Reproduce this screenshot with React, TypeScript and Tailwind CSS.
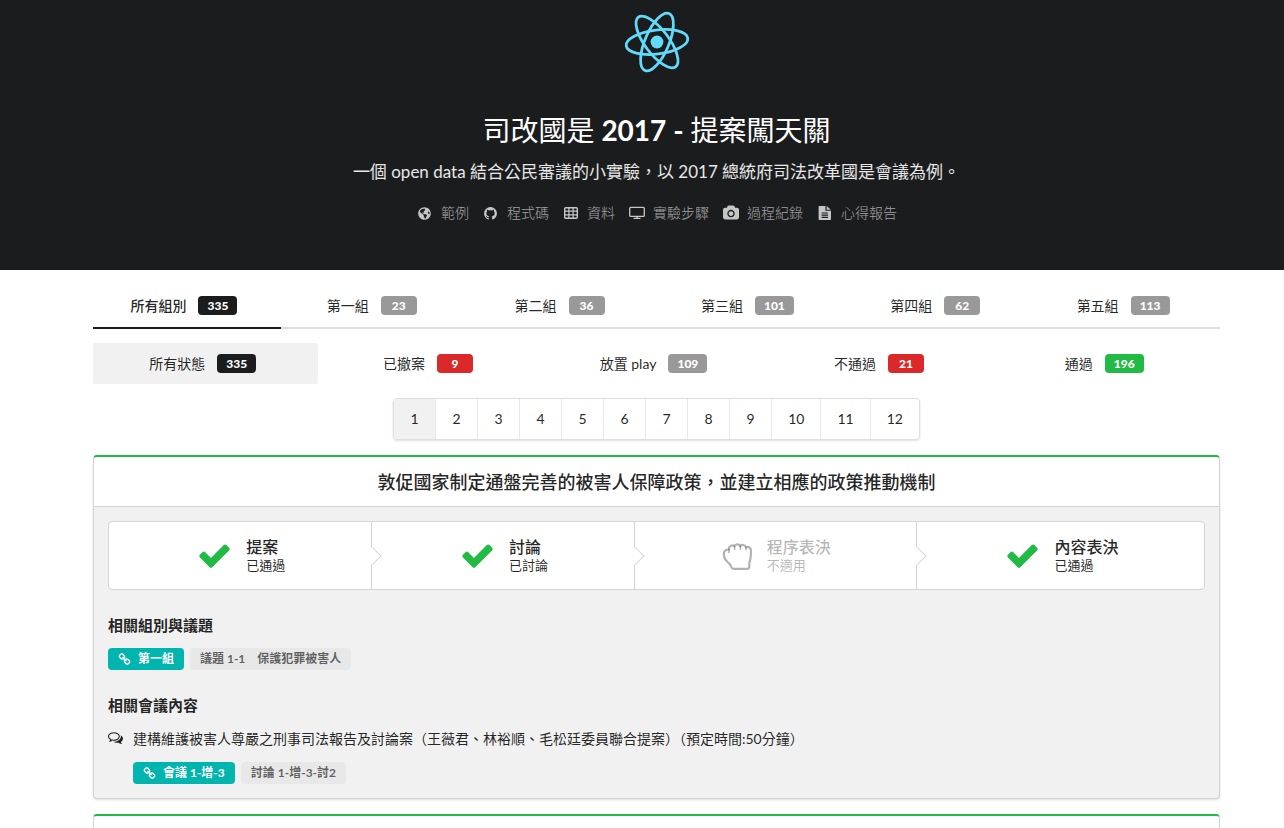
import type { ReactNode } from 'react';
import clsx from 'clsx';
import { FaGlobeAmericas } from 'react-icons/fa';

type Color = 'black' | 'grey' | 'red' | 'green';

interface MenuEntry {
  name: string;
  count: number;
  color: Color;
}

interface StepEntry {
  title: string;
  description: string;
  passed: boolean;
}

const groups: MenuEntry[] = [
  { name: '所有組別', count: 335, color: 'black' },
  { name: '第一組', count: 23, color: 'grey' },
  { name: '第二組', count: 36, color: 'grey' },
  { name: '第三組', count: 101, color: 'grey' },
  { name: '第四組', count: 62, color: 'grey' },
  { name: '第五組', count: 113, color: 'grey' },
];

const statuses: MenuEntry[] = [
  { name: '所有狀態', count: 335, color: 'black' },
  { name: '已撤案', count: 9, color: 'red' },
  { name: '放置 play', count: 109, color: 'grey' },
  { name: '不通過', count: 21, color: 'red' },
  { name: '通過', count: 196, color: 'green' },
];

const steps: StepEntry[] = [
  { title: '提案', description: '已通過', passed: true },
  { title: '討論', description: '已討論', passed: true },
  { title: '程序表決', description: '不適用', passed: false },
  { title: '內容表決', description: '已通過', passed: true },
];

const pages = [1, 2, 3, 4, 5, 6, 7, 8, 9, 10, 11, 12];

const badgeColors: Record<Color, string> = {
  black: 'bg-[#1b1c1d]',
  grey: 'bg-[#999999]',
  red: 'bg-[#db2828]',
  green: 'bg-[#21ba45]',
};

/* Icons */

function Logo() {
  return (
    <svg className="size-20" viewBox="-40 -40 80 80" fill="none" stroke="#61dafb" strokeWidth="2.8">
      <circle r="6.4" fill="#61dafb" stroke="none" />
      <g transform="rotate(-7)">
        <ellipse rx="31" ry="12" />
        <ellipse rx="31" ry="12" transform="rotate(60)" />
        <ellipse rx="31" ry="12" transform="rotate(120)" />
      </g>
    </svg>
  );
}

function GithubIcon() {
  return (
    <svg className="size-[15px]" viewBox="0 0 1792 1792" fill="currentColor">
      <path d="M1664 896q0 251-146.5 451.5t-378.5 277.5q-27 5-39.5-7t-12.5-30v-211q0-97-52-142 57-6 102.5-18t94-39 81-66.5 53-105 20.5-150.5q0-121-79-206 37-91-8-204-28-9-81 11t-92 44l-38 24q-93-26-192-26t-192 26q-16-11-42.5-27t-83.5-38.5-86-13.5q-44 113-7 204-79 85-79 206 0 85 20.5 150t52.5 105 80.5 67 94 39 102.5 18q-40 36-49 103-21 10-45 15t-57 5-65.5-21.5-55.5-62.5q-19-32-48.5-52t-49.5-24l-20-3q-21 0-29 4.5t-5 11.5 9 14 13 12l7 5q22 10 43.5 38t31.5 51l10 23q13 38 44 61.5t67 30 69.5 7 55.5-3.5l23-4q0 38 .5 89t.5 54q0 18-13 30t-40 7q-232-77-378.5-277.5t-146.5-451.5q0-209 103-385.5t279.5-279.5 385.5-103 385.5 103 279.5 279.5 103 385.5z" />
    </svg>
  );
}

function TableIcon() {
  return (
    <svg className="size-4" viewBox="0 0 16 16" fill="none" stroke="currentColor">
      <rect x="1.7" y="2.7" width="12.6" height="10.6" rx="1" strokeWidth="1.4" />
      <path d="M5.9 3v10M10.1 3v10M2 6.2h12M2 9.8h12" strokeWidth="1.2" />
    </svg>
  );
}

function ScreenIcon() {
  return (
    <svg className="size-4" viewBox="0 0 16 16" fill="none" stroke="currentColor" strokeWidth="1.3">
      <rect x=".7" y="2.4" width="14.6" height="9" rx="1" />
      <path d="M4.5 13.4h7M8 11.5v1.5" />
    </svg>
  );
}

function CameraIcon() {
  return (
    <svg className="size-4" viewBox="-64 -64 1920 1920" fill="currentColor">
      <path d="M896 672q119 0 203.5 84.5t84.5 203.5-84.5 203.5-203.5 84.5-203.5-84.5-84.5-203.5 84.5-203.5 203.5-84.5zm704-416q106 0 181 75t75 181v896q0 106-75 181t-181 75h-1408q-106 0-181-75t-75-181v-896q0-106 75-181t181-75h224l51-136q19-49 69.5-84.5t103.5-35.5h512q53 0 103.5 35.5t69.5 84.5l51 136h224zm-704 1152q185 0 316.5-131.5t131.5-316.5-131.5-316.5-316.5-131.5-316.5 131.5-131.5 316.5 131.5 316.5 316.5 131.5z" />
    </svg>
  );
}

function FileIcon() {
  return (
    <svg className="size-4" viewBox="0 0 16 16" fill="currentColor">
      <path
        fillRule="evenodd"
        d="M2.4 1h6v4.800h5.600v8.400q0 .8-.8.8H2.400q-.8 0-.8-.8V1.800q0-.8.8-.8zM4.600 7.400v1.100h6.400v-1.100zM4.600 9.600v1.100h6.400v-1.100zM4.600 11.800v1.100h6.400v-1.100zM9.600 1l4.300 3.700H9.600z"
      />
    </svg>
  );
}

function CheckIcon() {
  return (
    <svg className="size-[35px] text-[#21ba45]" viewBox="0 0 1792 1792" fill="currentColor">
      <path d="M1671 566q0 40-28 68l-724 724-136 136q-28 28-68 28t-68-28l-136-136-362-362q-28-28-28-68t28-68l136-136q28-28 68-28t68 28l294 295 656-657q28-28 68-28t68 28l136 136q28 28 28 68z" />
    </svg>
  );
}

function FistIcon() {
  return (
    <svg
      className="size-[35px]"
      viewBox="0 0 35 35"
      fill="none"
      stroke="currentColor"
      strokeWidth="2.2"
      strokeLinecap="round"
      strokeLinejoin="round"
    >
      <path d="M9 11.500C8.400 8.300 12.300 6.200 14.300 8.200 15.500 5.800 19 5.800 20.200 8 21.800 6.200 25.200 6.700 26 9.200 28.500 8.200 31 9.800 31 12.500 31 18 30.600 21.500 29.300 25V28.500Q29.300 30.800 27.200 30.800H13.800Q12 30.800 11.400 29C11 27.200 9.500 25.800 7.500 24 4.800 21.500 3.800 19.500 3.800 16.500 3.800 13 5.500 11.300 9 11.500Z" />
      <path d="M9 11.500v3M14.600 8.500v2.700M20.400 8.300v2.900M26 9.400v2.400" strokeWidth="1.6" />
    </svg>
  );
}

function LinkIcon() {
  return (
    <svg className="size-[13px]" viewBox="0 0 1792 1792" fill="currentColor">
      <path d="M1520 1216q0-40-28-68l-208-208q-28-28-68-28-42 0-72 32 3 3 19 18.5t21.5 21.5 15 19 13 25.5 3.5 27.5q0 40-28 68t-68 28q-15 0-27.5-3.5t-25.5-13-19-15-21.5-21.5-18.5-19q-33 31-33 73 0 40 28 68l206 207q27 27 68 27 40 0 68-26l147-146q28-28 28-67zm-703-705q0-40-28-68l-206-207q-28-28-68-28-39 0-68 27l-147 146q-28 28-28 67 0 40 28 68l208 208q27 27 68 27 42 0 72-31-3-3-19-18.5t-21.5-21.5-15-19-13-25.5-3.5-27.5q0-40 28-68t68-28q15 0 27.5 3.5t25.5 13 19 15 21.5 21.5 18.5 19q33-31 33-73zm895 705q0 120-85 203l-147 146q-83 83-203 83-121 0-204-85l-206-207q-83-83-83-203 0-123 88-209l-88-88q-86 88-208 88-120 0-204-84l-208-208q-84-84-84-204t85-203l147-146q83-83 203-83 121 0 204 85l206 207q83 83 83 203 0 123-88 209l88 88q86-88 208-88 120 0 204 84l208 208q84 84 84 204z" />
    </svg>
  );
}

function CommentsIcon() {
  return (
    <svg className="size-[15px]" viewBox="0 0 1792 1792" fill="currentColor">
      <path d="M704 384q-153 0-286 52t-211.5 141-78.5 191q0 82 53 158t149 132l97 56-35 84q34-20 62-39l44-31 53 10q78 14 153 14 153 0 286-52t211.5-141 78.5-191-78.5-191-211.5-141-286-52zm0-128q191 0 353.5 68.5t256.5 186.5 94 257-94 257-256.5 186.5-353.5 68.5q-86 0-176-16-124 88-278 128-36 9-86 16h-3q-11 0-20.5-8t-11.5-21q-1-3-1-6.5t.5-6.5 2-6l2.5-5 3.5-5.5 4-5 4.5-5 4-4.5q5-6 23-25t26-29.5 22.5-29 25-38.5 20.5-44q-124-72-195-177t-71-224q0-139 94-257t256.5-186.5 353.5-68.5zm822 1169q10 24 20.5 44t25 38.5 22.5 29 26 29.5 23 25q1 1 4 4.5t4.5 5 4 5 3.5 5.5l2.5 5 2 6 .5 6.5-1 6.5q-3 14-13 22t-22 7q-50-7-86-16-154-40-278-128-90 16-176 16-271 0-472-132 58 4 88 4 161 0 309-45t264-129q125-92 192-212t67-254q0-77-23-152 129 71 204 178t75 230q0 120-71 224.5t-195 176.5z" />
    </svg>
  );
}

const links = [
  { name: '範例', icon: <FaGlobeAmericas className="size-[13px]" /> },
  { name: '程式碼', icon: <GithubIcon /> },
  { name: '資料', icon: <TableIcon /> },
  { name: '實驗步驟', icon: <ScreenIcon /> },
  { name: '過程紀錄', icon: <CameraIcon /> },
  { name: '心得報告', icon: <FileIcon /> },
];

/* Small pieces */

function Badge({ color, children }: { color: Color; children: ReactNode }) {
  return (
    <span
      className={clsx(
        'flex h-[19px] min-w-9 items-center justify-center rounded px-[9px] text-xs font-black text-white',
        badgeColors[color],
      )}
    >
      {children}
    </span>
  );
}

function Tag({ linked, children }: { linked?: boolean; children: ReactNode }) {
  return (
    <a
      href="#"
      className={clsx(
        'flex h-[22px] items-center gap-[7px] rounded px-[10px] text-xs font-bold whitespace-pre',
        linked ? 'bg-[#00b5ad] text-white' : 'bg-[#e8e8e8] text-black/60',
      )}
    >
      {linked && <LinkIcon />}
      {children}
    </a>
  );
}

function Step({ step, last }: { step: StepEntry; last: boolean }) {
  return (
    <div
      className={clsx(
        'relative flex flex-auto items-center justify-center border-[#d4d4d5]',
        !last && 'border-r',
        !step.passed && 'text-black/30',
      )}
    >
      <span className={clsx('mr-3 flex justify-center', step.passed ? 'w-10' : 'w-[35px]')}>
        {step.passed ? <CheckIcon /> : <FistIcon />}
      </span>
      <div>
        <div className="text-base leading-5 font-medium">{step.title}</div>
        <div className="text-[13px] leading-[17px]">{step.description}</div>
      </div>
      {!last && (
        <span className="absolute top-1/2 right-0 z-10 size-[15px] translate-x-1/2 -translate-y-1/2 rotate-45 border-t border-r border-[#d4d4d5] bg-white" />
      )}
    </div>
  );
}

export default function App() {
  return (
    <div className="flex min-h-screen flex-col bg-white font-['Lato','Noto_Sans_CJK_TC',sans-serif] text-sm leading-5 text-black/87">
      <header className="flex flex-col items-center bg-[#1b1c1d] pt-[2px] pb-[47px] pl-[29px] text-white">
        <Logo />
        <h1 className="mt-[30px] text-[28px] leading-9 font-bold">
          <span className="font-normal">司改國是</span> 2017 - <span className="font-normal">提案闖天關</span>
        </h1>
        <p className="mt-3 text-[17px] leading-6 text-white/90">
          一個 open data 結合公民審議的小實驗，以 2017 總統府司法改革國是會議為例。
        </p>
        <nav className="mt-[19px] flex gap-[13px]">
          {links.map((link) => (
            <a key={link.name} href="#" className="flex items-center gap-2 font-light text-white/60">
              <span className="flex w-[17px] justify-center text-white/75">{link.icon}</span>
              {link.name}
            </a>
          ))}
        </nav>
      </header>

      <main className="flex grow flex-col pt-[14px] pl-[29px]">
        <div className="mx-auto flex w-full max-w-[1127px] grow flex-col">
          {/* Group tabs */}
          <nav className="grid h-[45px] grid-cols-6 border-b-2 border-[#dededf]">
            {groups.map((group, index) => (
              <a
                key={group.name}
                href="#"
                className={clsx(
                  '-mb-[2px] flex items-center justify-center gap-3 border-b-2 pr-[6px]',
                  index === 0 ? 'border-[#1b1c1d] font-medium' : 'border-transparent',
                )}
              >
                {group.name}
                <Badge color={group.color}>{group.count}</Badge>
              </a>
            ))}
          </nav>

          {/* Status filter */}
          <nav className="mt-[14px] grid h-[41px] grid-cols-5">
            {statuses.map((status, index) => (
              <a
                key={status.name}
                href="#"
                className={clsx(
                  'flex items-center justify-center gap-3 pr-[6px]',
                  index === 0 && 'rounded-xs bg-[#f1f1f1]',
                )}
              >
                {status.name}
                <Badge color={status.color}>{status.count}</Badge>
              </a>
            ))}
          </nav>

          {/* Pagination */}
          <nav className="mt-[14px] flex h-[42px] self-center overflow-hidden rounded border border-[#dededf] shadow-sm">
            {pages.map((page) => (
              <a
                key={page}
                href="#"
                className={clsx(
                  'flex min-w-[42px] items-center justify-center border-r border-[#e8e8e8] px-4 last:border-r-0',
                  page === 1 && 'bg-[#f1f1f1]',
                )}
              >
                {page}
              </a>
            ))}
          </nav>

          {/* Proposal */}
          <article className="mt-[15px] rounded border border-t-2 border-[#d4d4d5] border-t-[#21ba45] bg-[#f1f1f1] shadow-sm">
            <h2 className="flex h-[50px] items-center justify-center rounded-t border-b border-[#d4d4d5] bg-white text-lg font-medium">
              敦促國家制定通盤完善的被害人保障政策，並建立相應的政策推動機制
            </h2>
            <div className="p-[14px]">
              <div className="flex h-[69px] rounded border border-[#d4d4d5] bg-white">
                {steps.map((step, index) => (
                  <Step key={step.title} step={step} last={index === steps.length - 1} />
                ))}
              </div>

              <h3 className="mt-[25px] text-[15px] font-bold">相關組別與議題</h3>
              <div className="mt-[13px] flex gap-[6px]">
                <Tag linked>第一組</Tag>
                <Tag>議題 1-1　保護犯罪被害人</Tag>
              </div>

              <h3 className="mt-[25px] text-[15px] font-bold">相關會議內容</h3>
              <div className="mt-[14px] flex gap-[10px]">
                <span className="pt-px">
                  <CommentsIcon />
                </span>
                <div>
                  <p>建構維護被害人尊嚴之刑事司法報告及討論案（王薇君、林裕順、毛松廷委員聯合提案）（預定時間:50分鐘）</p>
                  <div className="mt-[13px] flex gap-[6px]">
                    <Tag linked>會議 1-增-3</Tag>
                    <Tag>討論 1-增-3-討2</Tag>
                  </div>
                </div>
              </div>
            </div>
          </article>

          {/* Next proposal, runs on past the fold */}
          <article className="mt-[15px] grow rounded-t border border-t-2 border-b-0 border-[#d4d4d5] border-t-[#21ba45] bg-white" />
        </div>
      </main>
    </div>
  );
}
